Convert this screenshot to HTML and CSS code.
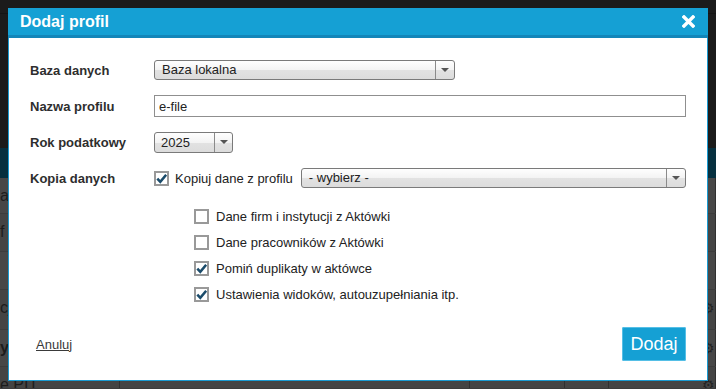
FILE: index.html
```html
<!DOCTYPE html>
<html lang="pl">

<head>
    <meta charset="UTF-8">
    <meta name="viewport" content="width=device-width, initial-scale=1.0">
    <title>Dodaj profil</title>
    <link rel="stylesheet" href="styles.css">
</head>

<body>
    <!-- page behind the modal (already dimmed) -->
    <div id="page">
        <div class="topbar"></div>
        <div class="band"></div>
        <div class="rows">
            <div class="row r1"><span class="c c1">ap</span><span class="c c2"></span><span class="c c3"></span><span class="c c4"></span><span class="c c5"></span></div>
            <div class="row r2 alt"><span class="c c1">f</span><span class="c c2"></span><span class="c c3"></span><span class="c c4"></span><span class="c c5"></span></div>
            <div class="row r3"><span class="c c1"></span><span class="c c2"></span><span class="c c3"></span><span class="c c4"></span><span class="c c5"></span></div>
            <div class="row r4 alt"><span class="c c1">cj</span><span class="c c2"></span><span class="c c3"></span><span class="c c4"></span><span class="c c5">&#9881;</span></div>
            <div class="row r5"><span class="c c1 bold">y</span><span class="c c2"></span><span class="c c3"></span><span class="c c4"></span><span class="c c5">&#9881;</span></div>
            <div class="row r6 alt"><span class="c c1">e PIT</span><span class="c c2"></span><span class="c c3"></span><span class="c c4"></span><span class="c c5">&#9881;</span></div>
        </div>
    </div>

    <div id="dialog">
        <div class="dlg-head">
            <span class="dlg-title">Dodaj profil</span>
            <svg class="close" width="13" height="13" viewBox="0 0 13 13">
                <path d="M2 2 L11 11 M11 2 L2 11" stroke="#fff" stroke-width="3.4" stroke-linecap="square" />
            </svg>
        </div>

        <div class="dlg-body">
            <div class="field">
                <label>Baza danych</label>
                <div class="select sel-db">
                    <span class="val">Baza lokalna</span>
                    <span class="arr"><i></i></span>
                </div>
            </div>
            <div class="field">
                <label>Nazwa profilu</label>
                <input class="text" type="text" value="e-file">
            </div>
            <div class="field">
                <label>Rok podatkowy</label>
                <div class="select sel-year">
                    <span class="val">2025</span>
                    <span class="arr"><i></i></span>
                </div>
            </div>
            <div class="field">
                <label>Kopia danych</label>
                <span class="cb on"><svg width="11" height="11" viewBox="0 0 11 11"><path d="M1.3 5.6 L4.3 8.8 L10.2 1.8" fill="none" stroke="#1b4c6b" stroke-width="2.6" /></svg></span>
                <span class="cb-text">Kopiuj dane z profilu</span>
                <div class="select sel-copy">
                    <span class="val">- wybierz -</span>
                    <span class="arr"><i></i></span>
                </div>
            </div>

            <div class="sublist">
                <div class="sub">
                    <span class="cb"></span>
                    <span>Dane firm i instytucji z Aktówki</span>
                </div>
                <div class="sub">
                    <span class="cb"></span>
                    <span>Dane pracowników z Aktówki</span>
                </div>
                <div class="sub">
                    <span class="cb on"><svg width="11" height="11" viewBox="0 0 11 11"><path d="M1.3 5.6 L4.3 8.8 L10.2 1.8" fill="none" stroke="#1b4c6b" stroke-width="2.6" /></svg></span>
                    <span>Pomiń duplikaty w aktówce</span>
                </div>
                <div class="sub">
                    <span class="cb on"><svg width="11" height="11" viewBox="0 0 11 11"><path d="M1.3 5.6 L4.3 8.8 L10.2 1.8" fill="none" stroke="#1b4c6b" stroke-width="2.6" /></svg></span>
                    <span>Ustawienia widoków, autouzupełniania itp.</span>
                </div>
            </div>
        </div>

        <div class="dlg-foot">
            <a href="javascript:;" class="cancel">Anuluj</a>
            <a href="javascript:;" class="btn">Dodaj</a>
        </div>
    </div>
</body>

</html>
```

FILE: styles.css
```css
* {
    box-sizing: border-box;
}

html,
body {
    margin: 0;
    height: 100%;
    overflow: hidden;
}

body {
    position: relative;
    background: #1b1b1b;
    font-family: "Liberation Sans", Arial, sans-serif;
    font-size: 13px;
    color: #333;
}

/* background page */
#page {
    height: 389px;
    overflow: hidden;
}

#page .topbar {
    height: 148px;
    background: #1b1b1b;
    border-top: 13px solid #1b1b1b;
    box-shadow: inset 0 1px 0 #141414;
}

#page .band {
    height: 30px;
    background: #06303f;
}

#page .row {
    display: flex;
    height: 38px;
    background: #474747;
    border-bottom: 1px solid #3c3c3c;
}

#page .row.alt {
    background: #444;
}

#page .r1 {
    height: 36px;
}

#page .r4 {
    height: 40px;
}

#page .r5 {
    height: 37px;
}

#page .r6 {
    height: 22px;
    background: #404040;
}

#page .c {
    height: 100%;
    border-right: 1px solid #303030;
    color: #1c1c1c;
    font-size: 16px;
    line-height: 36px;
    white-space: nowrap;
    overflow: hidden;
}

#page .r6 .c {
    line-height: 36px;
}

#page .c1 {
    width: 120px;
}

#page .c1.bold {
    font-weight: bold;
}

#page .c2 {
    width: 350px;
}

#page .c3 {
    width: 95px;
}

#page .c4 {
    width: 44px;
}

#page .c5 {
    flex: 1;
    text-align: right;
    font-size: 14px;
    color: #222;
}

/* dialog */
#dialog {
    position: absolute;
    left: 8px;
    top: 8px;
    width: 700px;
    height: 373px;
    background: #fff;
    border: 1px solid #1a9bd2;
    border-top: 0;
    display: flex;
    flex-direction: column;
}

.dlg-head {
    display: flex;
    align-items: center;
    justify-content: space-between;
    height: 30px;
    margin: 0 -1px;
    padding: 0 13px 0 12px;
    background: #15a0d4;
    border-bottom: 3px solid #1386b9;
}

.dlg-title {
    color: #fff;
    font-size: 16px;
    font-weight: bold;
}

.close {
    display: block;
}

.dlg-body {
    padding: 14px 21px 0 21px;
}

.field {
    display: flex;
    align-items: center;
    height: 36px;
}

.field label {
    width: 124px;
    flex: none;
    font-weight: bold;
    color: #2e2e2e;
}

.select {
    display: flex;
    height: 20px;
    border: 1px solid #7a7a7a;
    border-radius: 3px;
    background: linear-gradient(#fefefe, #f3f3f3 50%, #e2e2e2 52%, #dcdcdc);
}

.select .val {
    flex: 1;
    padding-left: 7px;
    line-height: 18px;
    color: #222;
}

.select .arr {
    width: 19px;
    border-left: 1px solid #8a8a8a;
    display: flex;
    align-items: center;
    justify-content: center;
}

.select .arr i {
    width: 0;
    height: 0;
    border-left: 4px solid transparent;
    border-right: 4px solid transparent;
    border-top: 4px solid #555;
}

.sel-db {
    width: 301px;
}

.sel-year {
    width: 79px;
    height: 21px;
}

.sel-year .val {
    line-height: 19px;
    padding-left: 6px;
}

.sel-year .arr {
    width: 18px;
}

.sel-copy {
    flex: 1;
}

.text {
    flex: 1;
    height: 22px;
    border: 1px solid #8f8f8f;
    padding: 0 4px;
    font-family: "Liberation Sans", Arial, sans-serif;
    font-size: 13px;
    color: #222;
    outline: none;
}

.cb {
    width: 15px;
    height: 15px;
    flex: none;
    border: 2px solid #999;
    background: #fff;
    display: flex;
    align-items: center;
    justify-content: center;
}

.cb-text {
    margin: 0 8px 0 6px;
    color: #222;
}

.sublist {
    margin-top: 7px;
    padding-left: 164px;
}

.sub {
    display: flex;
    align-items: center;
    gap: 7px;
    height: 26px;
    color: #222;
}

.dlg-foot {
    display: flex;
    align-items: center;
    justify-content: space-between;
    margin-top: 20px;
    padding: 0 21px 0 27px;
}

.cancel {
    color: #3a3a3a;
    text-decoration: underline;
}

.btn {
    width: 64px;
    height: 34px;
    line-height: 34px;
    text-align: center;
    font-size: 18px;
    color: #fff;
    text-decoration: none;
    background: #15a0d4;
    border-radius: 2px;
    box-shadow: 0 0 0 1px #55bfe6 inset;
}
```
